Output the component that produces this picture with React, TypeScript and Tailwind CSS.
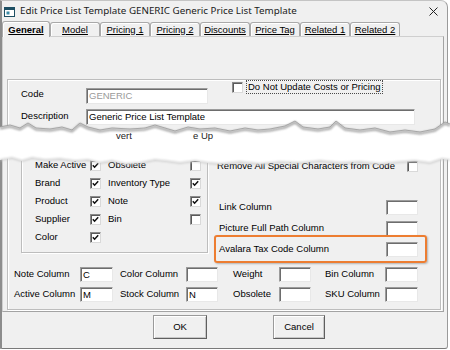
import React from "react";

// sunken edit box look of the old win32 dialogs
const boxCls =
  "bg-white border border-t-[#9c9c9c] border-l-[#9c9c9c] border-r-[#e8e8e8] border-b-[#e8e8e8] shadow-[inset_1px_1px_0_#6d6d6d] pl-[2px] pt-[1px] leading-[11px] overflow-hidden whitespace-nowrap";

function Box({ className, value, muted }: { className: string; value?: string; muted?: boolean }) {
  return <div className={`${boxCls} ${className} ${muted ? "text-[#9a9a9a]" : "text-black"}`}>{value}</div>;
}

function Check({ on }: { on?: boolean }) {
  return (
    <div className="w-[11px] h-[11px] shrink-0 bg-white border border-t-[#8a8a8a] border-l-[#8a8a8a] border-r-[#d9d9d9] border-b-[#d9d9d9] shadow-[inset_1px_1px_0_#5a5a5a] flex items-center justify-center">
      {on && (
        <svg width="7" height="7" viewBox="0 0 7 7">
          <path d="M0.8 3.2 L2.6 5.2 L6.2 1.2" fill="none" stroke="#111" strokeWidth="1.5" />
        </svg>
      )}
    </div>
  );
}

const tabs = ["Model", "Pricing 1", "Pricing 2", "Discounts", "Price Tag", "Related 1", "Related 2"];

const checkRows: [string, boolean, string, boolean][] = [
  ["Make Active", true, "Obsolete", false],
  ["Brand", true, "Inventory Type", true],
  ["Product", true, "Note", true],
  ["Supplier", true, "Bin", false],
  ["Color", true, "", false],
];

// jagged tear lines (absolute y)
const upper: [number, number][] = [
  [0, 127], [10, 125], [20, 128], [28, 123], [36, 128], [50, 129], [62, 127], [72, 130], [80, 123], [88, 127],
  [100, 130], [112, 128], [130, 129], [145, 128], [155, 125], [165, 128], [175, 131], [188, 127], [200, 129],
  [215, 128], [230, 131], [245, 128], [258, 130], [270, 129], [285, 126], [295, 121], [303, 127], [318, 129],
  [330, 127], [336, 121], [345, 128], [360, 130], [375, 128], [390, 132], [405, 130], [420, 132], [435, 129],
  [445, 122], [450, 124],
];
const lower: [number, number][] = [
  [0, 160], [12, 158], [22, 161], [32, 158], [45, 160], [60, 159], [75, 161], [88, 160], [100, 163], [112, 161],
  [125, 164], [140, 163], [155, 160], [165, 161], [180, 163], [195, 161], [208, 163], [220, 164], [240, 162],
  [260, 164], [280, 162], [300, 163], [320, 161], [340, 163], [360, 162], [380, 164], [400, 162], [415, 161],
  [430, 163], [442, 159], [450, 160],
];
const TOP = 115;
const line = (pts: [number, number][]) => pts.map(([x, y], i) => `${i ? "L" : "M"}${x} ${y - TOP}`).join(" ");
const gap =
  line(upper) + " " + [...lower].reverse().map(([x, y]) => `L${x} ${y - TOP}`).join(" ") + " Z";

function Tear() {
  return (
    <div className="absolute left-0 top-[115px] w-[450px] h-[55px] pointer-events-none">
      <svg width="450" height="55" viewBox="0 0 450 55" className="absolute inset-0">
        <defs>
          <filter id="soft" x="-5%" y="-50%" width="110%" height="200%">
            <feGaussianBlur stdDeviation="1.2" />
          </filter>
        </defs>
        <path d={gap} fill="#ffffff" />
        <path d={line(upper.map(([x, y]) => [x, y + 1.5]))} fill="none" stroke="#6f6f6f" strokeWidth="2" opacity="0.7" filter="url(#soft)" />
        <path d={line(upper)} fill="none" stroke="#9a9a9a" strokeWidth="0.8" />
        <path d={line(lower)} fill="none" stroke="#c8c8c8" strokeWidth="1.5" filter="url(#soft)" />
      </svg>
      <span className="absolute left-[116px] top-[15px] leading-[11px] text-[#222]">vert</span>
      <span className="absolute left-[193px] top-[15px] leading-[11px] text-[#222]">e Up</span>
    </div>
  );
}

export default function App() {
  return (
    <div className="relative w-[450px] h-[350px] bg-white overflow-hidden font-['Liberation_Sans',Arial,sans-serif] text-[9.5px] text-black">
      <div className="w-[448px] h-[349px] flex flex-col bg-[#f0f0f0] border-t border-t-[#c4c4c4] border-l-2 border-l-[#8c8c8c] border-r border-r-[#9a9a9a] border-b border-b-[#7a7a7a] rounded-tr-[7px] rounded-br-[3px] overflow-hidden">
        {/* title bar */}
        <div className="h-[20px] flex items-center pl-[2px] pr-[9px] shrink-0">
          <svg width="11" height="10" viewBox="0 0 11 10" className="mt-[1px]">
            <rect x="0.5" y="0.5" width="10" height="9" fill="#fff" stroke="#1d4f63" />
            <rect x="0.5" y="0.5" width="10" height="2.5" fill="#1d4f63" />
            <rect x="2.5" y="4.5" width="3" height="3" fill="#3b8aa6" />
          </svg>
          <span className="ml-[5px] font-['Noto_Sans',sans-serif] text-[9.8px] text-[#1b1b1b]">
            Edit Price List Template GENERIC Generic Price List Template
          </span>
          <svg width="9" height="9" viewBox="0 0 9 9" className="ml-auto">
            <path d="M0.5 0.5 L8.5 8.5 M8.5 0.5 L0.5 8.5" stroke="#222" strokeWidth="1" />
          </svg>
        </div>

        {/* tabs */}
        <div className="h-[15px] flex items-end shrink-0">
          <div className="relative z-10 w-[48px] h-[16px] -mb-px bg-[#f0f0f0] border border-b-0 border-[#a9a9a9] rounded-t-[3px] shadow-[inset_1px_1px_0_#ffffff] flex items-center justify-center font-bold underline leading-none">
            General
          </div>
          {tabs.map((t) => (
            <div
              key={t}
              className="w-[50px] h-[14px] bg-[#f0f0f0] border border-b-0 border-[#a9a9a9] rounded-t-[3px] shadow-[inset_1px_1px_0_#ffffff] flex items-center justify-center underline leading-none"
            >
              {t}
            </div>
          ))}
        </div>

        {/* tab page */}
        <div className="h-[276px] mr-[3px] shrink-0 border border-[#cfcfcf] border-r-[#a3a3a3] border-b-[#a3a3a3]">
          <div className="mt-[42px] ml-[4px] w-[434px] h-[231px] border border-[#bdbdbd] shadow-[inset_1px_1px_0_#ffffff,1px_1px_0_#ffffff] flex flex-col">
            {/* code + do not update */}
            <div className="h-[29px] flex items-start">
              <div className="ml-[13px] mt-[8px] flex items-start">
                <div className="w-[65px] leading-[11px]">Code</div>
                <Box className="w-[122px] h-[16px]" value="GENERIC" muted />
              </div>
              <div className="ml-[24px] flex items-start">
                <div className="mt-[2px]">
                  <Check />
                </div>
                <div className="ml-[3px] h-[14px] px-[1px] border border-dotted border-[#4a4a4a] leading-[12px] whitespace-nowrap">
                  Do Not Update Costs or Pricing
                </div>
              </div>
            </div>
            <div className="ml-[13px] flex items-start">
              <div className="w-[65px] leading-[11px] pt-[1px]">Description</div>
              <Box className="w-[329px] h-[16px]" value="Generic Price List Template" />
            </div>

            {/* checkbox group + column boxes */}
            <div className="mt-[30px] h-[98px] flex items-start">
              <div className="ml-[13px] w-[187px] h-[98px] border border-[#bdbdbd] shadow-[inset_1px_1px_0_#ffffff,1px_1px_0_#ffffff]">
                {checkRows.map(([a, ca, b, cb]) => (
                  <div key={a} className="h-[18px] flex items-center pl-[13px]">
                    <div className="w-[55px] whitespace-nowrap">{a}</div>
                    <Check on={ca} />
                    {b && (
                      <>
                        <div className="ml-[7px] w-[82px] whitespace-nowrap">{b}</div>
                        <Check on={cb} />
                      </>
                    )}
                  </div>
                ))}
              </div>
              <div className="ml-[9px] w-[202px] flex flex-col">
                <div className="mt-[2px] h-[18px] flex items-center justify-between pr-[1px]">
                  <span className="whitespace-nowrap">Remove All Special Characters from Code</span>
                  <Check />
                </div>
                <div className="mt-[25px] h-[15px] flex items-center justify-between pl-[2px] pr-[1px]">
                  <span>Link Column</span>
                  <Box className="w-[32px] h-[15px]" />
                </div>
                <div className="mt-[6px] h-[15px] flex items-center justify-between pl-[2px] pr-[1px]">
                  <span>Picture Full Path Column</span>
                  <Box className="w-[32px] h-[15px]" />
                </div>
                <div className="mt-[6px] h-[15px] flex items-center justify-between pl-[2px] pr-[1px]">
                  <span>Avalara Tax Code Column</span>
                  <Box className="w-[32px] h-[15px]" />
                </div>
              </div>
            </div>

            {/* loose columns */}
            <div className="mt-[14px] h-[15px] flex items-start pl-[6px]">
              <div className="w-[66px] pt-[1px] leading-[11px]">Note Column</div>
              <Box className="w-[33px] h-[15px]" value="C" />
              <div className="ml-[7px] w-[66px] pt-[1px] leading-[11px]">Color Column</div>
              <Box className="w-[32px] h-[15px]" />
              <div className="ml-[15px] w-[46px] pt-[1px] leading-[11px]">Weight</div>
              <Box className="w-[32px] h-[15px]" />
              <div className="ml-[14px] w-[60px] pt-[1px] leading-[11px]">Bin Column</div>
              <Box className="w-[33px] h-[15px]" />
            </div>
            <div className="mt-[5px] h-[15px] flex items-start pl-[6px]">
              <div className="w-[66px] pt-[1px] leading-[11px]">Active Column</div>
              <Box className="w-[33px] h-[15px]" value="M" />
              <div className="ml-[7px] w-[66px] pt-[1px] leading-[11px]">Stock Column</div>
              <Box className="w-[32px] h-[15px]" value="N" />
              <div className="ml-[15px] w-[46px] pt-[1px] leading-[11px]">Obsolete</div>
              <Box className="w-[32px] h-[15px]" />
              <div className="ml-[14px] w-[60px] pt-[1px] leading-[11px]">SKU Column</div>
              <Box className="w-[33px] h-[15px]" />
            </div>
          </div>
        </div>

        {/* buttons */}
        <div className="mt-[3px] flex">
          <button className="ml-[151px] w-[54px] h-[24px] bg-[#f0f0f0] border border-[#9a9a9a] border-b-[#5f5f5f] border-r-[#5f5f5f] shadow-[inset_1px_1px_0_#ffffff,inset_-1px_-1px_0_#c8c8c8]">
            OK
          </button>
          <button className="ml-[66px] w-[52px] h-[24px] bg-[#f0f0f0] border border-[#9a9a9a] border-b-[#5f5f5f] border-r-[#5f5f5f] shadow-[inset_1px_1px_0_#ffffff,inset_-1px_-1px_0_#c8c8c8]">
            Cancel
          </button>
        </div>
      </div>

      {/* annotation box */}
      <div className="absolute left-[214px] top-[235px] w-[213px] h-[28px] border-2 border-[#ed7d31] rounded-[3px] shadow-[1px_1px_2px_rgba(0,0,0,0.25)]" />

      <Tear />
    </div>
  );
}
